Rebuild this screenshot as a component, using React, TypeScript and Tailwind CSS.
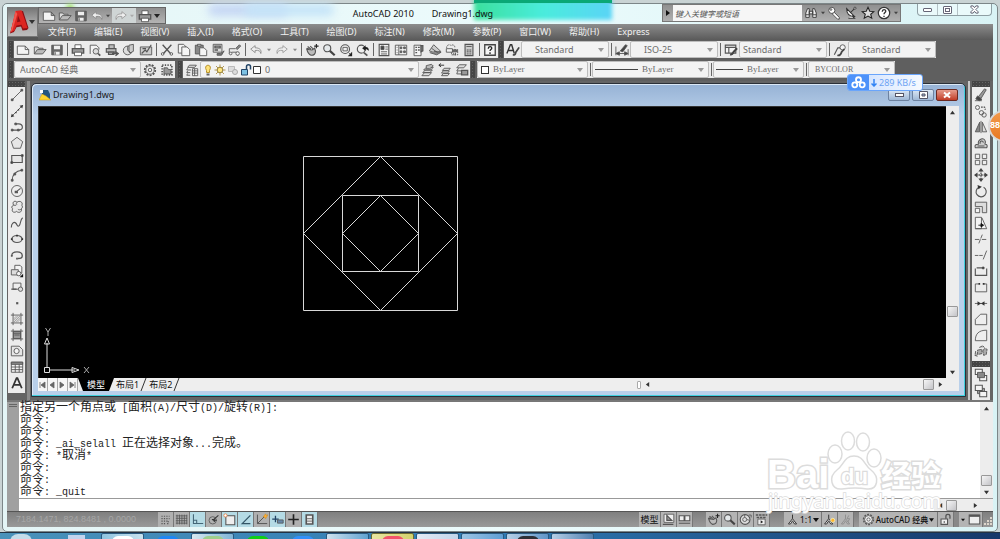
import React from "react";

const UI = "font-['Noto_Sans','Noto_Sans_CJK_SC',sans-serif]";
const MONO = "font-['Liberation_Mono','Noto_Sans_CJK_SC',monospace]";
const SERIF = "font-['Liberation_Serif','Noto_Sans_CJK_SC',serif]";

const G = "#555";
const L = "#f4f4f4";

type Draw = React.ReactNode;

/* ---------- icon drawings, all on a 16 x 16 grid ---------- */
const icons: Record<string, Draw> = {
  new: <path d="M1.5 3.5h9l4 4v5.500h-13zM10.500 3.500v4h4" fill={L} />,
  open: (
    <>
      <path d="M1.500 12.500v-8h4l1 1.500h5v2" fill="#ddd" />
      <path d="M1.500 12.500l3.500-5h10l-4 5z" fill="#bbb" />
    </>
  ),
  save: (
    <>
      <path d="M2 2.500h12v11h-12z" fill="#666" />
      <path d="M4.500 3h7v4h-7zM5 10h6v3.500h-6z" fill="#eee" stroke="none" />
      <path d="M6 10.500v3" />
    </>
  ),
  print: (
    <>
      <path d="M4.500 6v-4h7v4" fill="#fff" />
      <path d="M1.500 6.500h13v5h-13z" fill="#999" strokeWidth="1.5" />
      <path d="M4 10.500h8v4h-8z" fill="#fff" />
    </>
  ),
  preview: (
    <>
      <path d="M2.500 12.500v-10h7l3 3v2" fill={L} />
      <circle cx="9" cy="9.500" r="3.200" fill="#ddd" />
      <path d="M11.500 12l2.500 2.500" strokeWidth="2" />
    </>
  ),
  plot: (
    <>
      <path d="M4.500 6v-4h6v4M1.500 6.500h11v4h-11zM4 10h6v3h-6z" fill="#bbb" strokeWidth="1.300" />
      <path d="M8 12h6M12 10l3 2-3 2.500" strokeWidth="1.500" />
    </>
  ),
  publish: (
    <>
      <circle cx="6.500" cy="8.500" r="5" fill="#ddd" />
      <path d="M6.500 3.500v5l4 3M8 2.500l5-1v8l-4 2-1-3z" fill="#ccc" />
    </>
  ),
  markup: (
    <>
      <path d="M1.500 4.500h13v9h-13z" fill="#ccc" />
      <path d="M3 12l4-4 2 2 5-8M4 6.500h4" strokeWidth="1.300" />
    </>
  ),
  cut: (
    <>
      <path d="M3 2l9 10M13 2l-9 10" strokeWidth="1.500" />
      <circle cx="3" cy="12.500" r="1.500" />
      <circle cx="13" cy="12.500" r="1.500" />
    </>
  ),
  copy: (
    <>
      <path d="M1.500 1.500h6l2 2v8h-8z" fill={L} />
      <path d="M5.500 4.500h6l3 3v7h-9z" fill={L} />
    </>
  ),
  paste: (
    <>
      <path d="M1.500 2.500h9v10h-9z" fill="#888" />
      <path d="M4 1.500h4v2h-4z" fill="#ddd" />
      <path d="M6.500 5.500h5l3 3v6h-8z" fill={L} />
    </>
  ),
  match: (
    <>
      <path d="M2.500 1.500h10v9h-10z" fill="#ddd" />
      <path d="M4.500 3.500h6v2h-6zM4 8h4" strokeWidth="1.500" />
      <path d="M7 12h4l4-3-3 5h-5z" fill="#777" />
    </>
  ),
  block: (
    <>
      <path d="M1.500 12.500v-6h7M4 10.500h7v4" />
      <circle cx="3" cy="12" r="1.500" fill={L} />
      <circle cx="11" cy="12" r="2" fill={L} />
      <path d="M9 6l4-4 1.500 1.500-4 4z" fill="#888" />
    </>
  ),
  undo: <path d="M7 3l-5 4 5 4v-2.500c4-.5 6 .5 6.500 3.500 1-4-1-6.500-6.500-6.500z" fill="#eee" stroke="#888" />,
  redo: <path d="M9 3l5 4-5 4v-2.500c-4-.5-6 .5-6.500 3.500-1-4 1-6.500 6.500-6.500z" fill="#eee" stroke="#999" />,
  pan: (
    <>
      <path d="M2 6l3 1M3 4l4 3M6 3.500l3 3M2 7c1 4 2 6 5 7 4 0 5-2 5-5l-1-3-3 2z" fill="#bbb" strokeWidth="1.300" />
      <path d="M13 1v5M10.500 3.500h5" stroke="#222" strokeWidth="1.300" />
    </>
  ),
  zoom: (
    <>
      <circle cx="6" cy="6" r="4" fill="#e4e8ea" strokeWidth="1.300" />
      <path d="M9 9l5.500 5" strokeWidth="2.500" stroke="#444" />
    </>
  ),
  zoomWin: (
    <>
      <circle cx="7" cy="7" r="5" fill="#eee" strokeWidth="1.300" />
      <path d="M4.500 5h5v4h-5zM11 11l2.500 2.500" />
      <path d="M15 10v5h-5z" fill="#222" stroke="none" />
    </>
  ),
  zoomPrev: (
    <>
      <circle cx="6" cy="7" r="4.500" fill="#eee" strokeWidth="1.300" />
      <path d="M9 11l4 3.500" strokeWidth="2" />
      <path d="M7 6l4-3.500v2c3 0 4 2 3.500 4.500-1-1.500-2-2-3.500-2v2z" fill="#222" stroke="none" />
    </>
  ),
  props: (
    <>
      <path d="M2.500 1.500h11v13h-11z" fill={L} strokeWidth="1.300" />
      <path d="M4.500 3.500h3.500v4h-3.500z" fill="#444" />
      <path d="M9.500 4.500h3M9.500 7h3M4.500 10h7M4.500 12.500h7" />
    </>
  ),
  design: (
    <>
      <path d="M1.500 2.500h13v11h-13zM5.500 2.500v11" fill={L} />
      <path d="M7 4.500h2v2h-2zM11 4.500h2v2h-2zM7 9h2v2h-2zM11 9h2v2h-2zM3 5h1M3 8h1M3 11h1" fill="#777" />
    </>
  ),
  palettes: (
    <>
      <path d="M3.500 2.500h8v12h-8z" fill={L} />
      <path d="M11.500 3v7l2-1v-6zM5 5h2M5 8h2M5 11h2M8 5h2M8 8h2" fill="#999" strokeWidth="1.500" />
    </>
  ),
  sheets: (
    <>
      <path d="M1.500 9l5-7 8 7.500-6 2z" fill="#ccc" />
      <path d="M2 11l8 2.500 5-3-8-1M4 6l7 5" fill="#888" />
    </>
  ),
  markups: (
    <>
      <path d="M2 6c-1-4 4-5 5-3 2-2 5 0 4 3M7.500 7.500h7v6h-7z" strokeDasharray="2 1" />
      <path d="M1.500 6.500h7v4h-7z" fill={L} />
      <path d="M8 8h6v2h-6M10 11v3M12 11v3" fill="#777" />
    </>
  ),
  calc: (
    <>
      <path d="M3.500 1.500h9v13h-9z" fill="#ccc" strokeWidth="1.300" />
      <path d="M5.500 8h5M5.500 10h5M5.500 12.500h5" strokeDasharray="1 1" strokeWidth="1.500" />
      <path d="M5 4h6" />
    </>
  ),
  textStyle: (
    <>
      <path d="M1 12l4-10h1.500l3 10M3 8.500h5" strokeWidth="1.600" stroke="#333" />
      <path d="M8 13c2 2 3-1 3-2l4-6" strokeWidth="2" stroke="#444" />
    </>
  ),
  dimStyle: (
    <>
      <path d="M1 4v10M15 7v7M1 12h13" />
      <path d="M1 12l4-2v4zM15 12l-4-2v4zM6 9l6-7 2 1-5 7z" fill="#444" />
    </>
  ),
  tableStyle: (
    <>
      <path d="M1.500 2.500h12v9h-12zM1.500 5h12M5.500 5v6" fill={L} strokeWidth="1.300" />
      <path d="M7 13c3 1 3-1 4-3l4-4" strokeWidth="2.300" stroke="#444" />
    </>
  ),
  leader: (
    <>
      <path d="M1.500 13.500l4-8h4" strokeWidth="1.300" />
      <circle cx="11" cy="5" r="3" fill={L} />
      <path d="M5 14c4 1 4-2 5-4l3-3" strokeWidth="2" stroke="#444" />
    </>
  ),
  gear: (
    <>
      <circle cx="8" cy="8" r="6" strokeDasharray="2.200 1.500" strokeWidth="2" />
      <circle cx="8" cy="8" r="4.800" fill="#eee" />
      <circle cx="8" cy="8" r="2" />
    </>
  ),
  wsSave: (
    <>
      <path d="M2.500 2.500h11v11h-11z" strokeDasharray="1.500 1.500" strokeWidth="2" />
      <path d="M4.500 5.500h4l1 2h3v5h-8z" fill="#999" />
    </>
  ),
  layerProps: (
    <>
      <path d="M5 2.500h8l-2 2.500h-8zM3 6l-1 2h5M3 9l-1 2h4M3 12l-1 2h4" fill="#ddd" />
      <path d="M8.500 6.500h6v8h-6zM8.500 9h6M8.500 11.500h6M11 6.500v8" fill={L} />
    </>
  ),
  layers: (
    <>
      <path d="M4 11h8l-3 3.500h-8zM5 8h8l-3 3h-8zM6 5h8l-3 3h-8z" fill="#ddd" />
      <path d="M6 3l6-1.500 2 2-4 3h-4z" fill="#bbb" />
    </>
  ),
  layerPrev: (
    <>
      <path d="M6 12h7l-2 2.500h-7zM6 9h7l-2 2.500h-7zM7 6h7l-2 2.500h-7z" fill="#ddd" />
      <path d="M1 2.500h6M3.500 .5L1 2.500l2.500 2" stroke="#222" />
    </>
  ),
  layerState: (
    <>
      <path d="M5 2h8l-3 3.500h-8zM4 6l-2 3h5M3 9.500l-1 3h5" fill="#ddd" />
      <path d="M7.500 8.500h7v5h-7z" fill="#999" strokeWidth="1.500" />
    </>
  ),
  /* draw toolbar */
  line: (
    <>
      <path d="M3 13l10-10" />
      <path d="M1.500 12.500h2v2h-2zM12.500 1.500h2v2h-2z" fill={G} />
    </>
  ),
  xline: (
    <>
      <path d="M2 14l12-12" />
      <path d="M1 15l1-4 3 3zM15 1l-1 4-3-3zM6 9h1.500v1.500h-1.500zM9 6h1.500v1.500h-1.500z" fill="#333" stroke="none" />
    </>
  ),
  pline: (
    <>
      <path d="M2 11.500h8c6 0 5-7 0-7h-3" strokeWidth="1.300" />
      <path d="M1.500 10.500h2v2h-2zM8.500 10.500h2v2h-2zM5.500 3.500h2v2h-2z" fill={G} />
    </>
  ),
  polygon: <path d="M8 1.500l6.500 5-2.500 7.500h-8l-2.500-7.500z" fill="#e6e6e6" />,
  rect: (
    <>
      <path d="M2 4h12v8h-12z" fill="#e6e6e6" strokeWidth="1.300" />
      <path d="M1 11h2v2h-2zM13 3h2v2h-2z" fill="#333" />
    </>
  ),
  arc: (
    <>
      <path d="M2.500 14c0-6 4-11 11-11.500" strokeWidth="1.200" />
      <path d="M1.500 13h2v2h-2zM4.500 6h2v2h-2zM12.500 1.500h2v2h-2z" fill={G} />
    </>
  ),
  circle: (
    <>
      <circle cx="8" cy="8" r="6.300" fill="#eee" />
      <path d="M7 9l5-4M6 8.500h2.500v1.500h-2.500z" fill={G} strokeWidth="1.300" />
    </>
  ),
  revcloud: <path d="M4 6c-2-5 2.500-5.500 4-3.500 2.500-2 7.500-.5 5.500 3.500 1 1 1 3-.5 4 1 4.500-3.500 5-5.500 3-2 2-6.500 1-4.500-3-1.500-1-1.500-3 1-4zM4 6h3M9 10.500c1 1 3 1 4-.5M8 2.500c-1 1-1 2 0 3" fill="#e8e8e8" />,
  spline: <path d="M1.500 13c0-4 3-7 5-5s2 5 4 3 1-7 4-9" strokeWidth="1.300" />,
  ellipse: (
    <>
      <ellipse cx="8" cy="8" rx="5.800" ry="4" fill="#e6e6e6" strokeWidth="1.300" />
      <path d="M1 7h2v2h-2zM13 7h2v2h-2zM7 3h2v2h-2z" fill="#333" stroke="none" />
    </>
  ),
  ellArc: (
    <>
      <path d="M2 9c0-6 12-6 12 0 0 2-2 3-5 3" strokeWidth="1.500" />
      <path d="M1 8h2v2h-2zM7 11h2v2h-2z" fill={G} stroke="none" />
    </>
  ),
  insert: (
    <>
      <path d="M5.500 6.500v-5h6l2 2v7h-3" fill={L} />
      <path d="M1.500 6.500h8v6h-8z" fill="#ddd" />
      <circle cx="10" cy="11" r="2.500" fill={L} />
      <path d="M15 11v4h-4z" fill="#111" stroke="none" />
    </>
  ),
  mkblock: (
    <>
      <path d="M3.500 3.500h9v7h-9z" fill="#eee" />
      <path d="M1.500 10.500h6" strokeWidth="1.500" />
      <circle cx="12" cy="10.500" r="2.500" fill="#ddd" />
    </>
  ),
  point: <path d="M7 7h2.500v2.500h-2.500z" fill={G} stroke="none" />,
  hatch: (
    <>
      <path d="M1 3.500h14M1 12.500h14M3.500 1v14M12.500 1v14" />
      <path d="M4 8l4-4M4 12l8-8M8 12l4-4M4 10l6-6M6 12l6-6" stroke="#999" />
    </>
  ),
  gradient: (
    <>
      <path d="M4 4h8v8h-8z" fill="#999" />
      <path d="M1 3.500h14M1 12.500h14M3.500 1v14M12.500 1v14M4 6h8M5 8h6" />
    </>
  ),
  region: (
    <>
      <path d="M1.500 2.500h9l4 4v7h-13z" fill="#e6e6e6" />
      <circle cx="7.500" cy="8" r="3" fill={L} />
    </>
  ),
  table: (
    <>
      <path d="M1.500 2.500h13v11.500h-13zM1.500 8h13M1.500 11h13M6 5v9M10.500 5v9" fill={L} />
      <path d="M1.500 2.500h13v2.500h-13z" fill="#888" />
    </>
  ),
  text: <path d="M2.500 14l5-11.500h1l5 11.500M4.500 10h7" strokeWidth="2" stroke="#333" />,
  /* modify toolbar */
  erase: (
    <>
      <path d="M5 10l7-9 2 1-6 10z" fill="#999" />
      <path d="M4 9l5 4-3 1.500-4-2zM1 14.500h8" fill="#444" />
    </>
  ),
  copyObj: (
    <>
      <circle cx="4" cy="4" r="2.300" />
      <circle cx="8.500" cy="10" r="2.500" />
      <circle cx="11.500" cy="12.500" r="2.500" />
      <path d="M8 3.500h4l1 3" strokeDasharray="2 1" strokeWidth="1.500" />
    </>
  ),
  mirror: (
    <>
      <path d="M6.500 2.500v11h-5z" fill="#888" />
      <path d="M9.500 2.500v11h5z" fill="#ddd" />
      <path d="M8 1v14" />
    </>
  ),
  offset: <path d="M1.500 13.500c-1-3 0-4 3.500-4-1-6 7-9 8-3 0 2-1 3 0 3 3 0 2 3 1.500 4zM4 11.500h8M7 9c-1-4 4-4 3.500-1.500" fill="#ccc" strokeWidth="1.200" />,
  array: <path d="M1.500 2.500h5v5h-5zM9.500 2.500h5v5h-5zM1.500 9.500h5v5h-5zM9.500 9.500h5v5h-5z" fill="#eee" />,
  move: (
    <>
      <path d="M8 2v12M2 8h12" strokeDasharray="2 1" strokeWidth="1.500" />
      <path d="M8 0l3 4h-6zM8 16l3-4h-6zM0 8l4-3v6zM16 8l-4-3v6z" fill="#444" stroke="none" />
    </>
  ),
  rotate: (
    <>
      <path d="M6 3.500a5.800 5.800 0 1 0 5 .3" strokeWidth="1.300" />
      <path d="M4 1l5 2-4 3z" fill="#333" stroke="none" />
    </>
  ),
  scale: (
    <>
      <path d="M1.500 2.500h13v12h-5v-7h-8z" fill="#ddd" />
      <path d="M1.500 9.500h5v5h-5z" fill={L} />
    </>
  ),
  stretch: (
    <>
      <path d="M1.500 1.500h7v13h-7zM9 2l5.500 12.500h-13" fill={L} />
      <path d="M5 10.500h4M8 8.500l3 2-3 2z" fill="#111" stroke="#111" />
    </>
  ),
  trim: <path d="M1 8.500h5M9 8.500h6M5.500 13l4-10" strokeDasharray="5 1" />,
  extend: <path d="M1 8.500h4M6 8.500h4M10.500 13l4-10" />,
  breakAt: (
    <>
      <path d="M1.500 5v8h13v-8M3 4.500h8" strokeWidth="1.300" />
      <path d="M9.500 3.500h2v2h-2z" fill="#222" />
    </>
  ),
  breakObj: (
    <>
      <path d="M5 4.500h-3.500v9h13v-9h-3.500" />
      <path d="M5 3.500h2v2h-2zM10 3.500h2v2h-2z" fill="#333" stroke="none" />
    </>
  ),
  join: (
    <>
      <path d="M1 8.500h14" />
      <path d="M4 6l4 2.500-4 2.500zM12 6l-4 2.500 4 2.500z" fill="#333" stroke="none" />
    </>
  ),
  chamfer: <path d="M1.500 14.500v-6l6-6h7v12z" fill="#eee" />,
  fillet: <path d="M1.500 14.500c0-8 4-12 13-12v12z" fill="#eee" />,
  explode: <path d="M4 7l5-1v5l-5 1zM2 8l-1 5 3 1M6 4l4-2 2 2M10 8l2-3 3 1-1 6-3 1z" fill="#aaa" strokeDasharray="4 .7" />,
  front: (
    <>
      <path d="M1.500 1.500h8v6h-8zM6.500 8.500h8v6h-8z" fill={L} strokeWidth="1.200" />
      <path d="M4 5h8v6h-8z" fill="#888" />
    </>
  ),
  back: (
    <>
      <path d="M4 5h8v6h-8z" fill="#999" />
      <path d="M1.500 1.500h8v6h-8zM6.500 8.500h8v6h-8z" fill={L} strokeWidth="1.200" />
    </>
  ),
  /* search box tools */
  binoc: <path d="M2 13v-5l2-5h2v10zM14 13v-5l-2-5h-2v10zM6 6h4v3h-4zM2 10h4M10 10h4" fill="#eee" stroke="#333" />,
  key: (
    <>
      <path d="M8 7l6 6v2h-2l-6-6z" fill="#fff" stroke="#444" />
      <circle cx="5.500" cy="5" r="3.500" fill="#fff" stroke="#444" />
      <circle cx="4.500" cy="4" r="1" stroke="#444" />
    </>
  ),
  dish: (
    <>
      <path d="M3 3c0 6 3 9 9 9zM7 8l5-5M5 14h7l-3-3" fill="#fff" stroke="#333" strokeWidth="1.200" />
      <circle cx="12.500" cy="2.500" r="1.200" fill="#fff" stroke="#333" />
    </>
  ),
  star: <path d="M8 1.500l2 4.500 4.700.4-3.600 3 1.200 4.600-4.300-2.500-4.300 2.500 1.200-4.600-3.600-3 4.700-.4z" fill="#ddd" stroke="#222" strokeWidth="1.200" />,
  help: (
    <>
      <circle cx="8" cy="8" r="6.500" fill="#fff" stroke="#333" strokeWidth="1.400" />
      <path d="M6 6.500c0-3 4-3 4-.5 0 1.500-2 1.500-2 3.500M8 11v1.500" stroke="#333" strokeWidth="1.500" />
    </>
  ),
  helpBox: (
    <>
      <path d="M2 2h12v12h-12z" fill={L} strokeWidth="1.500" stroke="#444" />
      <path d="M6 6.500c0-3 4-3 4-.5 0 1.500-2 1.500-2 3M8 10.500v2" stroke="#222" strokeWidth="1.500" />
    </>
  ),
  /* status bar */
  snap: <path d="M3 4h10M3 7h10M3 10h8M3 13h5M11.500 10v3h-3" strokeDasharray="1.500 1.500" strokeWidth="1.500" />,
  grid: <path d="M2.500 2v12M5.500 2v12M8.500 2v12M11.500 2v12M14.500 2v12M1 3.500h14M1 6.500h14M1 9.500h14M1 12.500h14" />,
  ortho: <path d="M3 1.500v11.500h12M3 9h4v4" stroke="#467" strokeWidth="1.300" />,
  polar: (
    <>
      <circle cx="7" cy="9" r="4.500" />
      <path d="M7 9h5M7 9l7-6M6 8h3v3" stroke="#333" strokeWidth="1.300" />
    </>
  ),
  osnap: (
    <>
      <path d="M3.500 3.500h11v11h-11z" fill="#eee" strokeWidth="1.300" />
      <circle cx="3" cy="3" r="2" stroke="#e67a3a" fill="#fff" />
    </>
  ),
  otrack: <path d="M14 3l-10 10h10" stroke="#356" strokeWidth="1.500" />,
  ducs: (
    <>
      <path d="M3 2v11h12M3 13l9-9" strokeWidth="1.200" />
      <path d="M10 5l3-4 1 2 2-1-3 5-1-2z" fill="#fa3" stroke="#c80" strokeWidth=".5" />
    </>
  ),
  dyn: (
    <>
      <path d="M1.500 7.500h8M5.500 3.500v8" stroke="#246" strokeWidth="1.600" />
      <path d="M8 8.500h7v4h-7z" fill="#68a" />
    </>
  ),
  lwt: <path d="M1.500 8h13M8 1.500v13" strokeWidth="2" stroke="#222" />,
  qp: (
    <>
      <path d="M4 2.500h8v11h-8z" fill="#eee" strokeWidth="2" />
      <path d="M5 7h6M5 10h6" />
    </>
  ),
  qvLayout: (
    <>
      <path d="M2.500 1.500h12v10h-12z" fill="#eee" />
      <path d="M6 3v6h6zM1 14h13" fill="#999" strokeWidth="1.500" />
    </>
  ),
  qvDraw: <path d="M1.500 3.500h6v6h-6zM8.500 3.500h6v6h-6zM1 12.500h14" fill="#eee" strokeWidth="1.300" />,
  wheel: (
    <>
      <circle cx="7.500" cy="8" r="6" fill="#ddd" strokeWidth="1.300" />
      <circle cx="7" cy="8" r="2.500" />
      <path d="M12 2.500h3v3M7 2v3.500M13 9l-3.500-1" />
    </>
  ),
  motion: (
    <>
      <path d="M1 2.500h14M2 5.500h12" strokeDasharray="3 1" strokeWidth="2" />
      <path d="M3.500 7.500h9v7h-9z" fill="#eee" />
      <path d="M7 9l3 2-3 2z" fill="#222" stroke="none" />
    </>
  ),
  anno: <path d="M8 2v5M8 7l-5 6.500h2.500l2.500-4 2.500 4h2.500z" fill="#fff" stroke="#333" strokeWidth="1.200" />,
  annoVis: (
    <>
      <path d="M7 2v5M7 7l-5 6.500h2.500l2.500-4 2.500 4h2.500z" fill="#fff" stroke="#333" strokeWidth="1.200" />
      <circle cx="12" cy="9" r="2.500" fill="#ffb62e" stroke="#f4f0c0" />
    </>
  ),
  annoAuto: <path d="M8 2v5M8 7l-5 6.500h2.500l2.500-4 2.500 4h2.500zM12 3l-2 4h3l-2 4" fill="#bbb" stroke="#888" />,
  unlock: (
    <>
      <path d="M2.500 7.500h8v6.500h-8z" fill="#eee" strokeWidth="1.300" />
      <path d="M8.500 7v-3c0-3 5-3 5 0v3M6.500 10v2" strokeWidth="1.600" />
    </>
  ),
  clean: (
    <>
      <path d="M1.500 2.500h13v11h-13z" fill="#eee" strokeWidth="1.300" />
      <path d="M1.500 3.500h13" strokeWidth="2.500" />
    </>
  ),
};

function Icon({ name, size = "size-[14px]" }: { name: string; size?: string }) {
  return (
    <svg viewBox="0 0 16 16" className={`${size} shrink-0`} fill="none" stroke={G} strokeWidth="1">
      {icons[name]}
    </svg>
  );
}

function Tool({ name }: { name: string }) {
  return (
    <button aria-label={name} className="flex h-[17px] w-[17px] shrink-0 items-center justify-center">
      <Icon name={name} />
    </button>
  );
}

const Sep = () => (
  <div className="flex w-1 shrink-0 justify-center">
    <div className="my-[2px] w-px bg-[#666]" />
  </div>
);

const Grip = () => (
  <div className="w-[6px] shrink-0 border-x border-[#5f5f5f] bg-[#454545] bg-[radial-gradient(#606060_1px,transparent_1px)] bg-[size:3px_3px]" />
);

function Caret({ tone = "text-[#999]", width = "w-[6px]" }: { tone?: string; width?: string }) {
  return (
    <svg viewBox="0 0 6 4" className={`h-1 shrink-0 ${width} ${tone}`}>
      <path d="M0 0h6L3 4z" fill="currentColor" />
    </svg>
  );
}

function Combo({
  label,
  value,
  width,
  before,
  text,
  pad = "pl-1",
}: {
  label: string;
  value: string;
  width: string;
  before?: React.ReactNode;
  text: string;
  pad?: string;
}) {
  return (
    <label
      className={`flex h-[17px] shrink-0 items-center gap-1 rounded-[2px] border border-[#bdbdbd] bg-[#f3f3f3] pr-1 ${pad} ${width}`}
    >
      {before}
      <select aria-label={label} className={`min-w-0 flex-1 appearance-none bg-transparent text-[#6c6c6c] outline-none ${text}`}>
        <option>{value}</option>
      </select>
      <Caret />
    </label>
  );
}

function Header() {
  const menus = ["文件(F)", "编辑(E)", "视图(V)", "插入(I)", "格式(O)", "工具(T)", "绘图(D)", "标注(N)", "修改(M)", "参数(P)", "窗口(W)", "帮助(H)", "Express"];
  return (
    <header className="flex">
      <div className="flex w-[31px] shrink-0 flex-col pt-[3px]">
        <button
          aria-label="菜单浏览器"
          className="flex h-[30px] items-center border border-[#777] bg-linear-to-b from-[#777] via-[#a8a8a8] to-[#bcbcbc]"
        >
          <svg viewBox="0 0 20 26" className="ml-[1px] h-[26px] w-[20px]">
            <path d="M7 3l7-1 5.500 17-1.500 2-4.500.5-1.500-4-4.500.8L5 23l-4 1.500z" fill="#8e0f14" />
            <path fillRule="evenodd" d="M6.500 2l6-.8L18.500 19l-4.500.5-1.500-3.800-5 .8L5.500 21.500 1.500 23.500zM9 6.500l2.500 6-3.500.8z" fill="#dc2622" />
            <path d="M6.500 2l1.800 3L3.500 21l-2 2.500z" fill="#f2574f" />
          </svg>
          <Caret tone="text-[#333]" />
        </button>
        <div className="h-[3px] bg-[#555]" />
      </div>
      <div className="flex min-w-0 flex-1 flex-col">
        <div className="relative flex h-5 items-end">
          <div className="absolute left-[436px] top-[-4px] h-5 w-[138px] bg-linear-to-r from-[#3be09c] via-[#4aecdc] to-[#5ad4f6] blur-[2px]" />
          <div className="absolute left-[436px] top-[-4px] h-[3px] w-[138px] bg-[#0aa876]" />
          <div className="absolute left-7 top-0 size-2 rounded-full bg-[#a4e06c] blur-[2px]" />
          <div className="absolute left-[170px] top-0 h-3 w-20 rounded-full bg-[#c5d6f4] blur-[4px]" />
          <div className="absolute left-[206px] top-0 h-3 w-[90px] rounded-full bg-[#c5e4f8] blur-[4px]" />
          <div className="relative flex h-[17px] w-[128px] shrink-0 items-center gap-[2px] border border-[#666] bg-linear-to-b from-[#8f8f8f] to-[#b4b4b4] px-[3px]">
            {["new", "open", "save", "undo"].map((n) => (
              <button key={n} aria-label={n}>
                <Icon name={n} />
              </button>
            ))}
            <Caret width="w-1" tone="text-[#444]" />
            <div className="flex h-[15px] items-center gap-[2px] bg-[#cfd5d5] px-[2px]">
              <button aria-label="redo"><Icon name="redo" /></button>
              <Caret width="w-1" tone="text-[#aaa]" />
            </div>
            <button aria-label="print"><Icon name="print" /></button>
            <Caret tone="text-[#222]" />
          </div>
          <h1 className={`relative flex flex-1 justify-center gap-[18px] self-center pl-[18px] text-[9px] leading-4 text-[#111] ${UI}`}>
            <span>AutoCAD 2010</span>
            <span>Drawing1.dwg</span>
          </h1>
          <div className="flex h-[18px] shrink-0 items-center self-start border border-[#777] bg-linear-to-b from-[#909090] to-[#b0b0b0]">
            <button aria-label="展开" className="flex w-[10px] justify-center">
              <svg viewBox="0 0 4 6" className="h-[6px] w-1"><path d="M0 0v6l4-3z" fill="#111" /></svg>
            </button>
            <input
              aria-label="搜索"
              placeholder="键入关键字或短语"
              className={`h-full w-[129px] bg-[#f6f6f6] px-[2px] text-[8px] italic placeholder:text-[#555] ${UI}`}
            />
            <div className="flex w-[98px] items-center justify-between px-[2px]">
              <button aria-label="binoculars"><Icon name="binoc" /></button>
              <Caret width="w-1" tone="text-[#444]" />
              <button aria-label="key"><Icon name="key" /></button>
              <button aria-label="dish"><Icon name="dish" /></button>
              <button aria-label="star"><Icon name="star" /></button>
              <button aria-label="help"><Icon name="help" /></button>
              <Caret width="w-1" tone="text-[#444]" />
            </div>
          </div>
          <div className="ml-4 mr-[1px] flex h-3 shrink-0 items-center self-start rounded-b-[4px] border border-t-0 border-[#8f9fa4] bg-[#eafafb]">
            <button aria-label="最小化" className="flex h-full w-5 items-center justify-center border-r border-[#b4c2c6]">
              <span className="h-[4px] w-[9px] rounded-[1px] border border-[#667] bg-white" />
            </button>
            <button aria-label="最大化" className="flex h-full w-5 items-center justify-center border-r border-[#b4c2c6]">
              <span className="flex h-[8px] w-[9px] items-center justify-center rounded-[1px] border border-[#667] bg-white">
                <span className="h-[4px] w-[5px] border border-[#667]" />
              </span>
            </button>
            <button aria-label="关闭" className="flex h-full w-[33px] items-center justify-center">
              <svg viewBox="0 0 10 10" className="size-[9px]"><path d="M1 1h2.500L5 3l1.500-2H9v1.500L6.500 5 9 7.500V9H6.500L5 7 3.500 9H1V7.500L3.500 5 1 2.500z" fill="#fff" stroke="#556" /></svg>
            </button>
          </div>
        </div>
        <nav className={`flex h-4 items-center gap-[18px] bg-linear-to-b from-[#8d8d8d] to-[#5a5a5a] pl-[10px] text-[9px] leading-4 text-[#f1f1f1] ${UI}`}>
          {menus.map((m) => (
            <a key={m} href="#" className="shrink-0">{m}</a>
          ))}
        </nav>
      </div>
    </header>
  );
}

function Toolbars() {
  const std = `text-[9px] ${UI}`;
  const ser = `text-[9px] ${SERIF}`;
  const tools = (names: string[]) => names.map((n) => <Tool key={n} name={n} />);
  return (
    <div className="flex flex-col gap-[3px] bg-[#5f5f5f] pb-[3px] pl-[1px] pt-[1px]">
      <div className="flex h-[17px]">
        <Grip />
        <div className="flex shrink-0 bg-[#ebebeb]">
          {tools(["new", "open", "save"])}
          <Sep />
          {tools(["print", "preview", "plot", "publish", "markup"])}
          <Sep />
          {tools(["cut", "copy", "paste", "match", "block"])}
          <Sep />
          <Tool name="undo" />
          <button aria-label="undo list" className="flex w-[9px] items-center justify-center"><Caret width="w-1" tone="text-[#888]" /></button>
          <Tool name="redo" />
          <button aria-label="redo list" className="flex w-[9px] items-center justify-center"><Caret width="w-1" tone="text-[#888]" /></button>
          <Sep />
          {tools(["pan", "zoom", "zoomWin", "zoomPrev"])}
          <Sep />
          {tools(["props", "design", "palettes", "sheets", "markups", "calc"])}
          <Sep />
          <Tool name="helpBox" />
        </div>
        <Grip />
        <div className="flex shrink-0 bg-[#ebebeb]">
          <Tool name="textStyle" />
          <Combo label="文字样式" value="Standard" width="w-[88px]" pad="pl-[13px]" text={std} />
          <Sep />
          <Tool name="dimStyle" />
          <Combo label="标注样式" value="ISO-25" width="w-[88px]" pad="pl-[13px]" text={std} />
          <Sep />
          <Tool name="tableStyle" />
          <Combo label="表格样式" value="Standard" width="w-[88px]" pad="pl-[3px]" text={std} />
          <Sep />
          <Tool name="leader" />
          <Combo label="多重引线样式" value="Standard" width="w-[88px]" pad="pl-[13px]" text={std} />
        </div>
      </div>
      <div className="flex h-[17px]">
        <Grip />
        <div className="flex shrink-0 bg-[#ebebeb]">
          <Combo label="工作空间" value="AutoCAD 经典" width="w-[127px]" pad="pl-[5px]" text={std} />
          {tools(["gear", "wsSave"])}
        </div>
        <div className="w-[2px] shrink-0" />
        <Grip />
        <div className="flex shrink-0 bg-[#ebebeb]">
          <Tool name="layerProps" />
          <Combo
            label="图层"
            value="0"
            width="w-[219px]"
            pad="pl-[2px]"
            text={std}
            before={
              <svg viewBox="0 0 58 14" className="h-[14px] w-[58px] shrink-0" fill="none" stroke="#666">
                <path d="M3.500 7.500c-4-7 7-7 3 0v2h-3z" fill="#ffe37a" stroke="#b8932c" />
                <path d="M3.500 11.500h3" strokeWidth="2" />
                <path d="M17 1.500v11M11.500 7h11M13 3l8 8M21 3l-8 8" stroke="#b59a55" />
                <circle cx="17" cy="7" r="2.800" fill="#ffe680" stroke="#94803c" />
                <path d="M25.500 3.500h6v5h-6z" fill="#ddd" stroke="#bbb" />
                <circle cx="32" cy="9" r="2.500" stroke="#aaa" fill="#ddd" />
                <path d="M38.500 6.500h6v5.500h-6z" fill="#7cc0e2" stroke="#246" />
                <path d="M43.500 6v-2.500c0-2.500 4-2.500 4 0v3" stroke="#246" strokeWidth="1.500" />
                <path d="M50.500 3.500h7v7h-7z" fill="#fff" stroke="#333" />
              </svg>
            }
          />
          {tools(["layers", "layerPrev", "layerState"])}
        </div>
        <Grip />
        <div className="ml-[1px] flex shrink-0 bg-[#ebebeb]">
          <Combo
            label="颜色"
            value="ByLayer"
            width="w-[111px]"
            pad="pl-[3px]"
            text={ser}
            before={<span className="size-[8px] border border-[#333] bg-white" />}
          />
          <Sep />
          <Combo label="线型" value="ByLayer" width="w-[117px]" pad="pl-[2px]" text={ser} before={<span className="h-px w-[43px] bg-[#444]" />} />
          <Sep />
          <Combo label="线宽" value="ByLayer" width="w-[91px]" pad="pl-[2px]" text={ser} before={<span className="h-px w-[27px] bg-[#444]" />} />
          <Sep />
          <Combo label="打印样式" value="BYCOLOR" width="w-[87px]" pad="pl-[6px]" text={`text-[8px] ${SERIF}`} />
        </div>
      </div>
    </div>
  );
}

function SideBar({ names }: { names: string[] }) {
  return (
    <div className="flex flex-col bg-[#ececec]">
      <div className="h-[6px] bg-[#454545] bg-[radial-gradient(#666_1px,transparent_1px)] bg-[size:3px_3px]" />
      {names.map((n) => (
        <button key={n} aria-label={n} className="flex h-4 items-center justify-center">
          <Icon name={n} />
        </button>
      ))}
      <div className="h-[2px]" />
    </div>
  );
}

const arrows = {
  up: "M0 4h6L3 0z",
  down: "M0 0h6L3 4z",
  left: "M5 -1v6L1 2z",
  right: "M1 -1v6L5 2z",
};
function Arrow({ dir }: { dir: keyof typeof arrows }) {
  return (
    <button aria-label={dir} className="flex size-3 shrink-0 items-center justify-center">
      <svg viewBox="0 -1 6 6" className="size-[5px]"><path d={arrows[dir]} fill="#333" /></svg>
    </button>
  );
}
const Thumb = () => <div className="size-[11px] shrink-0 rounded-[1px] border border-[#999] bg-linear-to-br from-[#f6f6f6] to-[#c4c4c8]" />;

function DrawingWindow() {
  const ctl = "flex h-[12px] w-[22px] items-center justify-center rounded-[2px] border border-[#6d82a0] bg-linear-to-b from-[#dbe7f4] to-[#9fb8d6]";
  return (
    <section className="mb-[3px] mt-[2px] flex min-w-0 flex-1 flex-col rounded-t-[5px] border border-[#2b3038] bg-linear-to-b from-[#96b2d5] via-[#b9d0ea] via-10% to-[#b9d0ea] px-[6px] pb-[5px] shadow-[inset_-1px_-1px_0_#3fd0de,inset_1px_1px_0_#dbe8f5]">
      <div className="flex h-[22px] shrink-0 items-center gap-[2px] pr-[1px]">
        <svg viewBox="0 0 12 12" className="ml-[1px] size-[12px]">
          <path d="M3 1h6l2 4v6H3z" fill="#24557f" />
          <path d="M0 11l3-6 4 2 5 4z" fill="#ffd42e" stroke="#c99a14" strokeWidth=".5" />
          <path d="M1 1h3v3H1z" fill="#fff" />
        </svg>
        <h2 className={`flex-1 text-[9px] leading-4 text-[#1a1a1a] ${UI}`}>Drawing1.dwg</h2>
        <div className="flex gap-[2px]">
          <button aria-label="最小化" className={ctl}><span className="h-[4px] w-[9px] border border-[#556] bg-white" /></button>
          <button aria-label="还原" className={ctl}>
            <svg viewBox="0 0 9 8" className="h-2 w-[9px]"><path d="M.5.5h8v7h-8z" fill="#fff" stroke="#556" /><path d="M3 3h3v2H3z" fill="#9fb8d6" stroke="#556" /></svg>
          </button>
          <button aria-label="关闭" className="flex h-[12px] w-[22px] items-center justify-center rounded-[2px] border border-[#6b2a22] bg-linear-to-b from-[#e59a8b] to-[#c03a25]">
            <svg viewBox="0 0 8 8" className="size-[8px]"><path d="M1 1.500l6 5M7 1.500l-6 5" stroke="#fff" strokeWidth="2" /></svg>
          </button>
        </div>
      </div>
      <div className="flex min-h-0 flex-1">
        <div className="relative min-w-0 flex-1 border-l border-t border-[#333] bg-black">
          <svg className="absolute inset-0 h-full w-full" fill="none" stroke="#d8d8d8">
            <path d="M264.500 49.500h154v154h-154zM303.500 88.500h76v76h-76z" />
            <path d="M341.500 49.500l77 77-77 77-77-77zM341.500 88.500l38 38-38 38-38-38z" />
          </svg>
          <svg viewBox="0 0 60 60" className="absolute bottom-0 left-0 size-[60px]" fill="none" stroke="#ddd">
            <path d="M5.500 49.500h5v5h-5zM8 49v-24M11 52h25M8 20l2.500 6h-5zM40 52l-7-2.500v5z" />
            <path d="M6.500 10l2.500 4 2.500-4M9 14v4M45 49l5 6M50 49l-5 6" stroke="#aaa" />
          </svg>
        </div>
        <div className="flex w-[13px] shrink-0 flex-col items-center bg-[#ededed]">
          <Arrow dir="up" />
          <div className="flex-1" />
          <Thumb />
          <div className="h-[49px]" />
          <Arrow dir="down" />
        </div>
      </div>
      <div className="flex h-[13px] shrink-0 items-center bg-[#eee]">
        {["M2 1v6M7 1v6L3 4z", "M6 1v6L2 4z", "M2 1v6l4-3z", "M7 1v6M2 1v6l4-3z"].map((d) => (
          <button key={d} aria-label="布局导航" className="flex h-full w-[10px] items-center justify-center border-r border-[#aaa] bg-[#f6f6f6]">
            <svg viewBox="0 0 9 8" className="h-2 w-[9px]"><path d={d} fill="#666" stroke="#666" strokeWidth=".8" /></svg>
          </button>
        ))}
        <div className={`flex h-full text-[9px] leading-[13px] text-[#111] ${UI}`}>
          <button className="bg-black px-[9px] text-white [clip-path:polygon(0_0,100%_0,calc(100%-5px)_100%,5px_100%)]">模型</button>
          {["布局1", "布局2"].map((t) => (
            <button key={t} className="flex pl-[2px]">
              {t}
              <svg viewBox="0 0 8 13" className="h-[13px] w-2"><path d="M7 0L2 13" stroke="#333" /></svg>
            </button>
          ))}
        </div>
        <div className="flex-1" />
        <div className="h-2 w-1 rounded-[1px] border border-[#aaa] bg-white" />
        <Arrow dir="left" />
        <div className="w-[270px]" />
        <Thumb />
        <Arrow dir="right" />
        <div className="w-[13px]" />
      </div>
    </section>
  );
}

function Line({ text }: { text: string }) {
  return (
    <div className="flex h-3 items-baseline whitespace-pre">
      {text.split(/([\x20-\x7e]+)/).map((part, i) =>
        /^[\x20-\x7e]+$/.test(part) ? (
          <span key={i} className="text-[10px]">{part}</span>
        ) : (
          <span key={i}>{part}</span>
        ),
      )}
    </div>
  );
}

function CommandPanel() {
  const lines = [
    "指定另一个角点或 [面积(A)/尺寸(D)/旋转(R)]:",
    "命令:",
    "命令:",
    "命令: _ai_selall 正在选择对象...完成。",
    "命令: *取消*",
    "命令:",
    "命令:",
    "命令: _quit",
  ];
  return (
    <div className="relative flex shrink-0 border-t-2 border-[#777] bg-white">
      <div className="w-3 shrink-0 bg-[#a0a0a0] pt-[2px]">
        <div className="mx-[2px] h-[3px] border-y border-[#666]" />
      </div>
      <div className="flex min-w-0 flex-1 flex-col">
        <div className="flex border-b border-[#999]">
          <div className={`min-w-0 flex-1 pl-[1px] text-[12px] leading-[12px] text-[#222] ${MONO}`}>
            {lines.map((l, i) => (
              <Line key={i} text={l} />
            ))}
          </div>
          <div className="flex w-[13px] flex-col items-center bg-[#ededed]">
            <Arrow dir="up" />
            <div className="flex-1" />
            <Thumb />
            <Arrow dir="down" />
          </div>
        </div>
        <div className="flex h-3 items-center">
          <input aria-label="命令行" className="h-full min-w-0 flex-1 bg-transparent outline-none" />
          <div className="flex h-full items-center bg-[#ededed]">
            <Arrow dir="left" />
            <Thumb />
            <div className="w-3" />
            <Arrow dir="right" />
            <div className="w-3" />
          </div>
        </div>
      </div>
      <svg viewBox="0 0 180 90" className="pointer-events-none absolute bottom-0 right-[48px] h-[90px] w-[180px] overflow-visible" fill="#fff" stroke="#dcdcdc" strokeWidth="1.500">
        <ellipse cx="70" cy="33" rx="7" ry="9" />
        <ellipse cx="83" cy="20" rx="6.500" ry="9" />
        <ellipse cx="98" cy="21" rx="6.500" ry="9" />
        <ellipse cx="109" cy="37" rx="7" ry="9" />
        <path d="M89 35c10 0 10 9 17 14 9 7 7 20-4 19-6-1-18-1-25 0-11 1-14-12-5-19 7-5 7-14 17-14z" />
        <g className="font-['Liberation_Sans','Noto_Sans_CJK_SC',sans-serif]" fontWeight="bold" paintOrder="stroke" strokeWidth="3">
          <text x="2" y="67" fontSize="40">Bai</text>
          <text x="76" y="63" fontSize="22" strokeWidth="2.500">du</text>
          <text x="116" y="65" fontSize="30">经验</text>
        </g>
        <text x="3" y="87" fontSize="20" strokeWidth="1.500" paintOrder="stroke" className={UI}>jingyan.baidu.com</text>
      </svg>
    </div>
  );
}

function StatusBar() {
  const cell = "flex h-4 w-4 shrink-0 items-center justify-center border-r border-[#777]";
  const toggles: [string, boolean][] = [
    ["snap", false], ["grid", false], ["ortho", true], ["polar", false], ["osnap", true],
    ["otrack", true], ["ducs", false], ["dyn", true], ["lwt", false], ["qp", true],
  ];
  return (
    <footer className={`flex h-4 shrink-0 items-center overflow-hidden border-t border-[#555] bg-linear-to-b from-[#7f7f7f] to-[#999] text-[9px] text-[#111] ${UI}`}>
      <div className="w-[151px] shrink-0 pl-[9px] text-[9px] text-[#a6a6a6] font-['Liberation_Sans',sans-serif]">7184.1471, 824.8481 , 0.0000</div>
      {toggles.map(([n, on]) => (
        <button key={n} aria-label={n} aria-pressed={on} className={`${cell} ${on ? "bg-[#b5dbe5]" : "bg-[#b0b0b0]"}`}>
          <Icon name={n} size="size-[13px]" />
        </button>
      ))}
      <div className="flex-1" />
      <div className="flex bg-[#b4b4b4]">
        <button className="flex h-4 w-[22px] items-center justify-center border-r border-[#777]">模型</button>
        {["qvLayout", "qvDraw"].map((n) => (
          <button key={n} aria-label={n} className={cell}><Icon name={n} size="size-[13px]" /></button>
        ))}
      </div>
      <div className="w-[13px]" />
      <div className="flex bg-[#b4b4b4]">
        {["pan", "zoom", "wheel", "motion"].map((n) => (
          <button key={n} aria-label={n} className={cell}><Icon name={n} size="size-[13px]" /></button>
        ))}
      </div>
      <div className="w-[14px]" />
      <div className="flex bg-[#b4b4b4]">
        <button className="flex h-4 w-[38px] items-center justify-center gap-[1px] border-r border-[#777]">
          <Icon name="anno" size="size-[13px]" />
          <span>1:1</span>
          <Caret tone="text-[#111]" />
        </button>
        {["annoVis", "annoAuto"].map((n) => (
          <button key={n} aria-label={n} className={cell}><Icon name={n} size="size-[13px]" /></button>
        ))}
      </div>
      <div className="w-[5px]" />
      <div className="flex bg-[#b4b4b4]">
        <button className="flex h-4 w-[79px] items-center justify-center gap-[1px] border-r border-[#777]">
          <Icon name="gear" size="size-[13px]" />
          <span className="whitespace-nowrap text-[8px] font-medium">AutoCAD 经典</span>
          <Caret width="w-[5px]" tone="text-[#111]" />
        </button>
        <button aria-label="unlock" className={cell}><Icon name="unlock" size="size-[13px]" /></button>
        <div className="w-[5px] bg-[#888]" />
        <button aria-label="status menu" className="flex h-4 w-2 items-center justify-center"><Caret width="w-1" tone="text-[#111]" /></button>
        <button aria-label="clean" className={cell}><Icon name="clean" size="size-[13px]" /></button>
      </div>
      <svg viewBox="0 0 10 12" className="h-3 w-[10px] shrink-0">
        <path d="M7 3h2v2H7zM4 6h2v2H4zM7 6h2v2H7zM1 9h2v2H1zM4 9h2v2H4zM7 9h2v2H7z" fill="#ddd6cc" />
      </svg>
    </footer>
  );
}

function TaskBar() {
  const items: [string, string][] = [
    ["border-[#2a5a80] bg-linear-to-r from-[#8fc4e0] to-[#c8e2ee]", "bg-white"],
    ["border-transparent", "bg-[#1f86f2]"],
    ["border-[#2a5a80] bg-linear-to-r from-[#d7e8ef] to-[#7fb4d6]", "bg-[#9fce8c]"],
    ["border-transparent", "bg-[#10cf16] rounded-none"],
    ["border-transparent", "bg-[#3390f8]"],
    ["border-[#2a5a80] bg-linear-to-r from-[#cfe2ee] to-[#5fa2d0]", "bg-transparent"],
    ["border-[#6b6b30] bg-linear-to-r from-[#e9e6a0] to-[#d2d26c]", "bg-[#f2546a]"],
    ["border-[#2a5a80] bg-linear-to-r from-[#e3eaf4] to-[#c2d4ea]", "bg-transparent"],
    ["border-[#2a5a80] bg-linear-to-r from-[#9cc4e4] to-[#5f9ed4]", "bg-transparent"],
    ["border-[#2a5a80] bg-linear-to-r from-[#b6cfe6] to-[#5f95c8]", "bg-[#2e3036]"],
    ["border-[#2a5a80] bg-linear-to-r from-[#b6cfe6] to-[#5080b0]", "bg-transparent"],
  ];
  return (
    <div className="flex h-[7px] shrink-0 overflow-hidden border-t border-[#234] bg-linear-to-r from-[#4a92ba] via-[#2e7ab4] to-[#16386a] pl-[10px]">
      <div className="mt-[1px] h-4 w-[22px] shrink-0 rounded-full bg-[#c4dcea]" />
      <div className="ml-[36px] mr-[16px] mt-[2px] h-3 w-[17px] shrink-0 bg-[#c3d4ee]" />
      <div className="flex gap-[2px]">
        {items.map(([frame, blob], i) => (
          <button key={i} aria-label="任务" className={`flex h-[14px] w-[43px] shrink-0 justify-center rounded-t-[2px] border pt-[2px] ${frame}`}>
            <span className={`h-4 w-[22px] rounded-t-[6px] ${blob}`} />
          </button>
        ))}
      </div>
    </div>
  );
}

export default function App() {
  return (
    <div className="relative flex h-screen flex-col overflow-hidden bg-[#c9d3d4]">
      <div className="mx-[2px] mt-[3px] flex min-h-0 flex-1 flex-col rounded-[5px] border border-[#7c8688] bg-linear-to-r from-[#e4f5f6] via-[#ecfbfc] to-[#d9f3f5] px-1 pb-1">
        <Header />
        <Toolbars />
        <main className="flex min-h-0 flex-1 items-stretch bg-[#646464] pl-[1px] pr-[3px]">
          <div className="w-[17px] shrink-0">
            <SideBar names={["line", "xline", "pline", "polygon", "rect", "arc", "circle", "revcloud", "spline", "ellipse", "ellArc", "insert", "mkblock", "point", "hatch", "gradient", "region", "table", "text"]} />
          </div>
          <div className="ml-[2px] mr-[1px] w-[3px] shrink-0 bg-[#8b8b8b]" />
          <DrawingWindow />
          <div className="ml-[2px] mr-[2px] w-[2px] shrink-0 bg-[#c8c8c8]" />
          <div className="flex w-[18px] shrink-0 flex-col">
            <SideBar names={["erase", "copyObj", "mirror", "offset", "array", "move", "rotate", "scale", "stretch", "trim", "extend", "breakAt", "breakObj", "join", "chamfer", "fillet", "explode"]} />
            <div className="h-[2px]" />
            <SideBar names={["front", "back"]} />
          </div>
        </main>
        <CommandPanel />
        <StatusBar />
      </div>
      <TaskBar />

      <div className={`absolute right-[77px] top-[74px] flex h-[17px] items-center overflow-hidden rounded-[3px] border border-[#6aa5fb] bg-linear-to-r from-[#c3daff] via-[#e2edff] to-[#f5f9ff] text-[9px] text-[#6ea3f3] ${UI}`}>
        <div className="flex h-full w-[21px] items-center justify-center bg-[#4d92fa]">
          <svg viewBox="0 0 16 14" className="h-[13px] w-[15px]" fill="none" stroke="#fff" strokeWidth="2">
            <circle cx="8" cy="4" r="2.700" />
            <circle cx="4" cy="9.500" r="2.700" />
            <circle cx="12" cy="9.500" r="2.700" />
          </svg>
        </div>
        <div className="flex w-[53px] items-center gap-[2px] pl-[2px]">
          <svg viewBox="0 0 6 8" className="h-2 w-[6px]"><path d="M3 0v7M.5 4.500L3 7l2.500-2.500" stroke="#3284f5" strokeWidth="1.500" fill="none" /></svg>
          <span className="whitespace-nowrap">289 KB/s</span>
        </div>
      </div>
      <div className="absolute right-[-20px] top-[110px] flex size-8 items-center rounded-full border-2 border-[#d8d8d8] bg-linear-to-b from-[#f29a4a] to-[#e87820] text-[9px] font-bold text-white font-['Liberation_Sans',sans-serif]">
        88
      </div>
    </div>
  );
}
